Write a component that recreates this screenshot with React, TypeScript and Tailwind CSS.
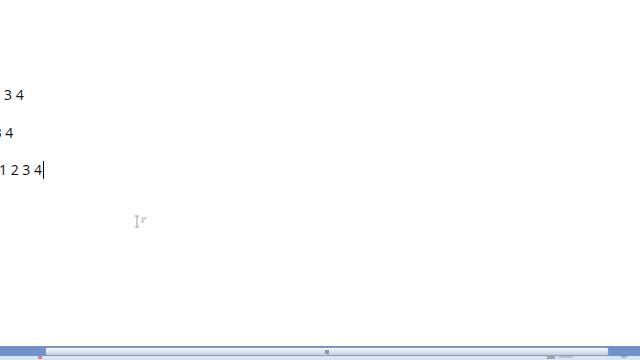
export default function App() {
  const lines = [
    { text: "3 4", shift: "ml-[4px]", caret: false },
    { text: "2 3 4", shift: "-ml-[18px]", caret: false },
    { text: "1 2 3 4", shift: "-ml-[1px]", caret: true },
  ];

  return (
    <div className="flex h-[360px] w-[640px] flex-col overflow-hidden bg-white font-['Open_Sans',sans-serif] text-[14px] text-[#111]">
      {/* document area */}
      <div className="relative flex-1">
        <div className="flex flex-col gap-[19.5px] pt-[86px]">
          {lines.map((line, i) => (
            <div key={i} className="flex h-[18px] items-center overflow-hidden">
              <span className={`${line.shift} whitespace-pre leading-[18px]`}>{line.text}</span>
              {line.caret && <span className="ml-[1px] h-[18px] w-[1px] bg-black" />}
            </div>
          ))}
        </div>

        {/* mouse I-beam */}
        <svg className="absolute left-[134px] top-[215px]" width="16" height="14" viewBox="0 0 16 14">
          <path d="M1 1h4M3 1v11M1 12h4" stroke="#9a9a9a" strokeWidth="1" fill="none" />
          <path d="M7 3h6M7 5h4M7 7h3" stroke="#b0b0b0" strokeWidth="1" />
        </svg>
      </div>

      {/* horizontal scrollbar */}
      <div className="flex h-[10px] items-stretch bg-[#7091c9] px-[1px] pt-[1px]">
        <div className="ml-[44px] flex w-[564px] items-center justify-center rounded-[2px] border border-[#8d9ab0] bg-gradient-to-b from-[#f6f8fb] via-[#dde3eb] to-[#c5cdd8]">
          <span className="h-[4px] w-[4px] bg-[#8c97a8]" />
        </div>
      </div>

      {/* status bar */}
      <div className="flex h-[4px] items-start bg-[#d6e4f6]">
        <span className="ml-[38px] h-[3px] w-[4px] bg-[#d98080]" />
        <span className="ml-[505px] h-[3px] w-[8px] bg-[#9aa6b8]" />
        <span className="ml-[4px] h-[2px] w-[14px] bg-[#b7c3d3]" />
        <span className="ml-[48px] h-[2px] w-[6px] bg-[#a8b4c6]" />
      </div>
    </div>
  );
}
